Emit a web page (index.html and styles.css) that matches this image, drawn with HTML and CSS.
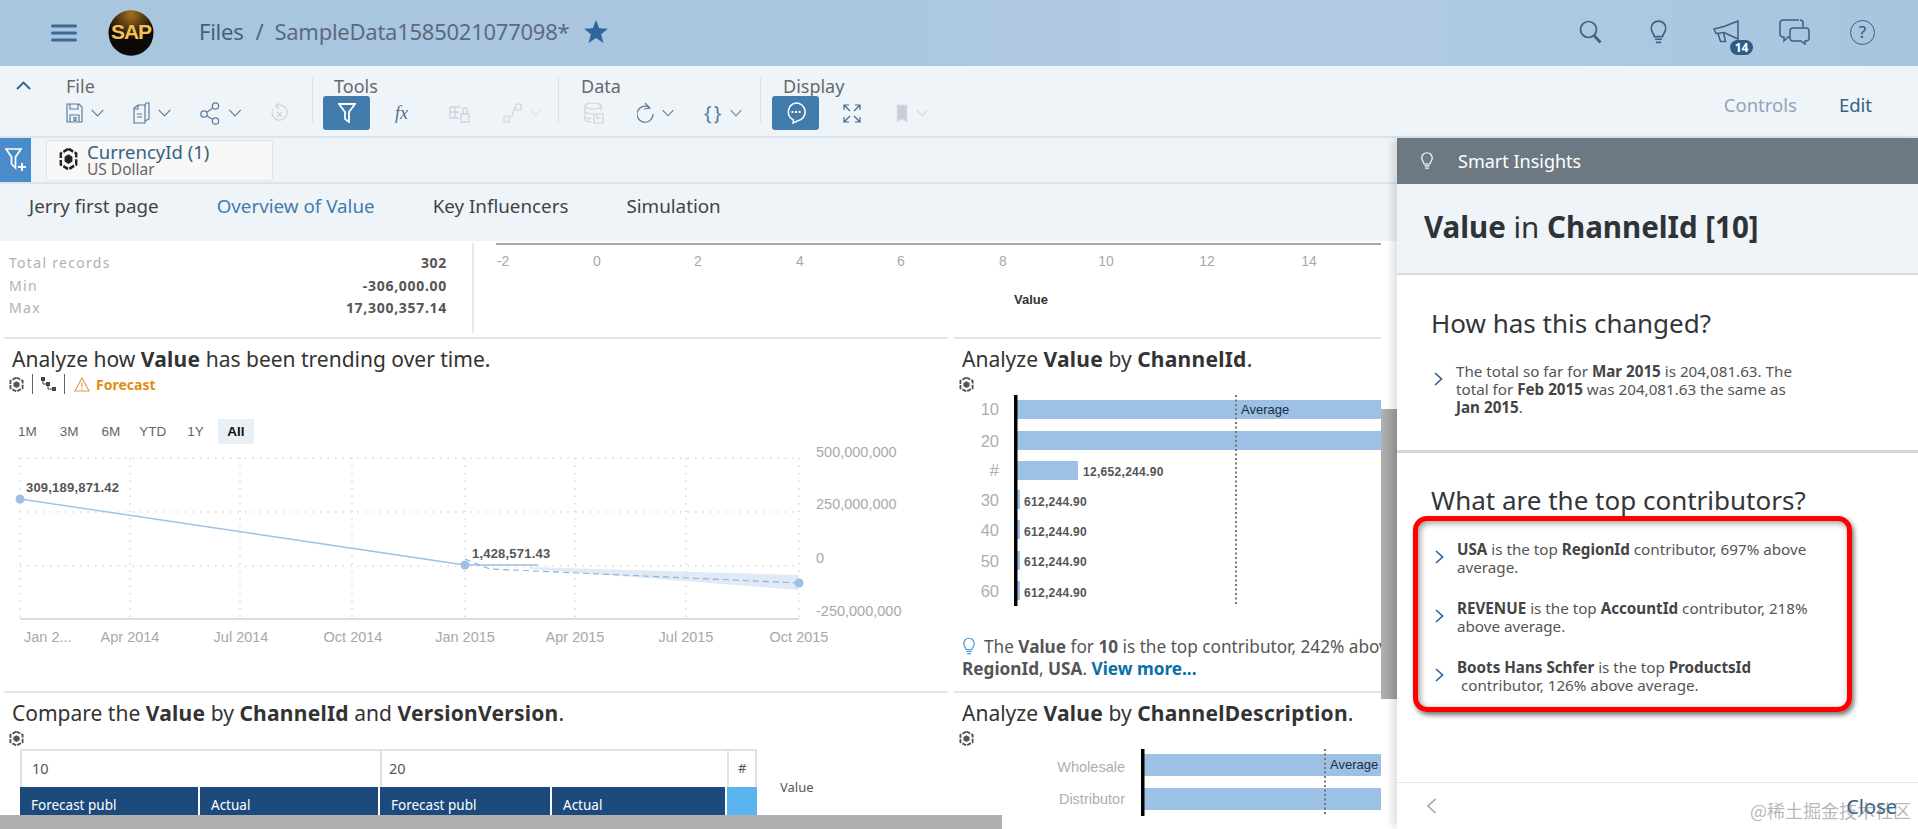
FILE: index.html
```html
<!DOCTYPE html>
<html lang="en">
<head>
<meta charset="utf-8">
<title>Smart Insights</title>
<link rel="stylesheet" href="styles.css">
</head>
<body>
<svg class="defs" width="0" height="0" aria-hidden="true">
  <symbol id="cube" viewBox="0 0 16 16">
    <path d="M8 .5 14.5 4v8L8 15.500 1.500 12V4z" fill="none" stroke="currentColor" stroke-width="2" stroke-dasharray="4.500 1.300"/>
    <path d="M8 4.500 11.300 6.300v3.600L8 11.700 4.700 9.900V6.300z" fill="currentColor"/>
  </symbol>
  <symbol id="chev" viewBox="0 0 13 8">
    <path d="M.7 .8 6.500 7 12.300 .8" fill="none" stroke="currentColor" stroke-width="1.100"/>
  </symbol>
  <symbol id="bulb" viewBox="0 0 16 24">
    <path d="M8 1a7 7 0 0 0-7 7c0 3.200 2.300 4.800 3.200 8h7.600c.9-3.200 3.200-4.800 3.200-8a7 7 0 0 0-7-7zM4.700 18.500h6.600M5.500 21.500h5" fill="none" stroke="currentColor" stroke-width="1.600"/>
  </symbol>
  <symbol id="right" viewBox="0 0 9 14">
    <path d="M1 1 7.500 7 1 13" fill="none" stroke="currentColor" stroke-width="1.700"/>
  </symbol>
</svg>

<header class="shell">
  <svg class="burger" width="26" height="18" viewBox="0 0 26 18"><path d="M1.500 2h23M1.500 9h23M1.500 16h23" stroke="#3a6a94" stroke-width="3" stroke-linecap="round"/></svg>
  <svg class="logo" width="46" height="46" viewBox="0 0 46 46">
    <defs><radialGradient id="lg" cx=".5" cy=".1" r=".55"><stop offset="0" stop-color="#a8701c"/><stop offset="1" stop-color="#0c0a08"/></radialGradient></defs>
    <ellipse cx="23" cy="23" rx="22.500" ry="22.800" fill="url(#lg)"/>
    <text x="23" y="29" text-anchor="middle" class="logo-text">SAP</text>
  </svg>
  <div class="crumbs"><span class="crumb-files">Files</span><span class="crumb-sep">/</span><span class="crumb-doc">SampleData1585021077098*</span></div>
  <svg class="star" width="24" height="23" viewBox="0 0 24 23"><path d="M12 0l3.200 8.300 8.800.5-6.900 5.500 2.300 8.700L12 18l-7.400 4.900 2.300-8.700L0 8.800l8.800-.5z" fill="#2f659c"/></svg>
  <div class="shell-icons">
    <svg width="23" height="24" viewBox="0 0 23 24"><circle cx="9.500" cy="9.500" r="8" fill="none" stroke="#3b6083" stroke-width="1.700"/><path d="M15 15.500l6.500 7" stroke="#3b6083" stroke-width="2.600"/></svg>
    <svg class="shell-bulb" width="17" height="25" viewBox="0 0 16 24"><use href="#bulb"/></svg>
    <div class="mega">
      <svg width="26" height="24" viewBox="0 0 26 24"><path d="M25 1v18L11 12.500 3 13.500 1 9l10-2.500zM5 13.500l2.500 8h5l-2-9" fill="none" stroke="#3b6083" stroke-width="1.500"/></svg>
      <span class="badge">14</span>
    </div>
    <svg class="shell-chat" width="31" height="26" viewBox="0 0 31 26"><path d="M20 1H4a3 3 0 0 0-3 3v11a3 3 0 0 0 3 3h1v4l4-4h2M14 9h13a3 3 0 0 1 3 3v7a3 3 0 0 1-3 3h-1v3l-4-3h-8a3 3 0 0 1-3-3v-7a3 3 0 0 1 3-3zM21 1a3 3 0 0 1 3 3v4" fill="none" stroke="#3b6083" stroke-width="1.500"/></svg>
    <div class="help">?</div>
  </div>
</header>

<section class="tbar">
  <svg class="collapse" width="15" height="9" viewBox="0 0 15 9"><path d="M1 8l6.500-6.500L14 8" fill="none" stroke="#346187" stroke-width="1.800"/></svg>
  <div class="tgroup tg-file">
    <div class="tlabel">File</div>
    <div class="trow">
      <div class="tool"><svg width="17" height="20" viewBox="0 0 17 20"><path d="M1 1h12l3 3v15H1zM4 1v5h8V1M4 19v-7h9v7M8 14.500h2v3H8z" fill="none" stroke="#5a7c9c" stroke-width="1.200"/></svg><svg class="cv" width="13" height="8"><use href="#chev"/></svg></div>
      <div class="tool"><svg width="17" height="22" viewBox="0 0 17 22"><path d="M1 6l4-3h7v18H1zM5 3v4H1M12 4l1-3h3v16l-4 2M4 12h5M4 15h5" fill="none" stroke="#5a7c9c" stroke-width="1.200"/></svg><svg class="cv" width="13" height="8"><use href="#chev"/></svg></div>
      <div class="tool"><svg width="20" height="23" viewBox="0 0 20 23"><circle cx="15.500" cy="4" r="3.200" fill="none" stroke="#5a7c9c" stroke-width="1.200"/><circle cx="4" cy="12" r="3.200" fill="none" stroke="#5a7c9c" stroke-width="1.200"/><circle cx="15.500" cy="19" r="3.200" fill="none" stroke="#5a7c9c" stroke-width="1.200"/><path d="M7 10l6-4M7 14l6 3.500" stroke="#5a7c9c" stroke-width="1.200"/></svg><svg class="cv" width="14" height="8"><use href="#chev"/></svg></div>
      <svg class="t-undo" width="17" height="22" viewBox="0 0 17 22"><path d="M5 4a7.500 7.500 0 1 1-3 3M8 1 4.500 4 8 7M6 10l5 5M11 10l-5 5" fill="none" stroke="#cdd5dc" stroke-width="1.200"/></svg>
    </div>
  </div>
  <div class="tsep"></div>
  <div class="tgroup tg-tools">
    <div class="tlabel">Tools</div>
    <div class="trow">
      <div class="tbtn"><svg width="18" height="20" viewBox="0 0 18 20"><path d="M1 1h16l-6 8v10l-4-3V9z" fill="none" stroke="#fff" stroke-width="1.800"/></svg></div>
      <span class="t-fx">fx</span>
      <svg class="t-lock" width="21" height="19" viewBox="0 0 21 19"><path d="M1 3h10M1 3v11h9M1 8h9M6 3v11M12 10h8v8h-8zM14 10V6a2 2 0 0 1 4 0v4" fill="none" stroke="#cbd4dc" stroke-width="1.300"/></svg>
      <div class="tool t-chart"><svg width="19" height="20" viewBox="0 0 19 20"><path d="M1 13h5v6H1zM13 1h5v6h-5zM6 15c5 0 3-10 7-11" fill="none" stroke="#cbd4dc" stroke-width="1.200"/></svg><svg class="cv off" width="11" height="8"><use href="#chev"/></svg></div>
    </div>
  </div>
  <div class="tsep"></div>
  <div class="tgroup tg-data">
    <div class="tlabel">Data</div>
    <div class="trow">
      <svg width="20" height="22" viewBox="0 0 20 22"><ellipse cx="9" cy="4" rx="8" ry="3" fill="none" stroke="#cbd4dc" stroke-width="1.200"/><path d="M1 4v13c0 1.500 3 3 7 3M17 4v5M1 9c0 2 4 3 8 3M1 14c0 1.500 3 2.500 6 2.800M10 12h9v9h-9zM13 12v4h4" fill="none" stroke="#cbd4dc" stroke-width="1.200"/></svg>
      <div class="tool t-refresh"><svg width="17" height="23" viewBox="0 0 17 23"><path d="M13 6a8 8 0 1 0 3 6M8 1l5 5-6 1" fill="none" stroke="#5a7c9c" stroke-width="1.200"/></svg><svg class="cv" width="12" height="8"><use href="#chev"/></svg></div>
      <div class="tool t-braces"><span class="braces">{ }</span><svg class="cv" width="12" height="8"><use href="#chev"/></svg></div>
    </div>
  </div>
  <div class="tsep"></div>
  <div class="tgroup tg-display">
    <div class="tlabel">Display</div>
    <div class="trow">
      <div class="tbtn"><svg width="20" height="22" viewBox="0 0 20 22"><path d="M10 1a9 9 0 0 1 2 17.800L7 21l.500-3A9 9 0 0 1 10 1z" fill="none" stroke="#fff" stroke-width="1.500"/><path d="M5.500 10h2M9 10h2M12.500 10h2" stroke="#fff" stroke-width="1.800"/></svg></div>
      <svg class="t-expand" width="18" height="19" viewBox="0 0 18 19"><path d="M7 7 1 1M1 6V1h5M11 7l6-6M12 1h5v5M7 12l-6 6M1 13v5h5M11 12l6 6M17 13v5h-5" fill="none" stroke="#45698a" stroke-width="1.200"/></svg>
      <div class="tool t-mark"><svg width="12" height="19" viewBox="0 0 12 19"><path d="M1 1h10v17l-5-3-5 3z" fill="#c6ced6" stroke="#dde3e8"/></svg><svg class="cv off" width="12" height="8"><use href="#chev"/></svg></div>
    </div>
  </div>
  <div class="tright"><span class="t-controls">Controls</span><span class="t-edit">Edit</span></div>
</section>

<div class="body-row">
  <main class="main">
    <div class="fbar">
      <div class="fbtn"><svg width="22" height="24" viewBox="0 0 22 24"><path d="M1 1h15l-5.500 8v11L6.500 16V9z" fill="none" stroke="#fff" stroke-width="1.700"/><path d="M17 15v8M13 19h8" stroke="#fff" stroke-width="1.800"/></svg></div>
      <div class="chip">
        <svg class="chip-ico" width="19" height="22" viewBox="0 0 16 16" preserveAspectRatio="none"><use href="#cube"/></svg>
        <div class="chip-text"><div class="chip-name">CurrencyId (1)</div><div class="chip-val">US Dollar</div></div>
      </div>
    </div>
    <nav class="tabs">
      <span class="tab">Jerry first page</span>
      <span class="tab tab-on">Overview of Value</span>
      <span class="tab">Key Influencers</span>
      <span class="tab">Simulation</span>
    </nav>
    <div class="content">
      <div class="grid">
        <div class="top-row">
          <div class="stats">
            <div class="stat"><span>Total records</span><b>302</b></div>
            <div class="stat"><span>Min</span><b>-306,000.00</b></div>
            <div class="stat"><span>Max</span><b>17,300,357.14</b></div>
          </div>
          <svg class="chart" width="907" height="96" viewBox="474 240 907 96">
            <path d="M496 243H1381" stroke="#8a8a8a" stroke-width="1.500"/>
            <g class="tick top-tick">
              <text x="503" y="265">-2</text><text x="597" y="265">0</text><text x="698" y="265">2</text><text x="800" y="265">4</text><text x="901" y="265">6</text><text x="1003" y="265">8</text><text x="1106" y="265">10</text><text x="1207" y="265">12</text><text x="1309" y="265">14</text>
            </g>
            <text x="1031" y="303" class="top-value">Value</text>
          </svg>
        </div>

        <div class="card card-l">
          <h2 class="ctitle">Analyze how <b>Value</b> has been trending over time.</h2>
          <div class="meta">
            <svg class="mi" width="15" height="15"><use href="#cube"/></svg>
            <i class="msep"></i>
            <svg width="15" height="15" viewBox="0 0 15 15"><path d="M0 0h4v4H0zM5 5h4v4H5zM11 10h4v4h-4z" fill="#444"/><path d="M2 3v4h3M7 8v4h4" fill="none" stroke="#444"/></svg>
            <i class="msep"></i>
            <svg class="warn" width="16" height="15" viewBox="0 0 16 15"><path d="M8 1l7 13H1zM8 5.500v4.500M8 11v1.500" fill="none" stroke="#e8973a" stroke-width="1.100"/></svg>
            <span class="forecast">Forecast</span>
          </div>
          <div class="ranges"><span class="r-1m">1M</span><span class="r-3m">3M</span><span class="r-6m">6M</span><span class="r-ytd">YTD</span><span class="r-1y">1Y</span><span class="r-all">All</span></div>
          <svg class="chart line-chart" width="940" height="212" viewBox="12 445 940 212">
            <g class="grid-d">
              <path d="M20 459H799M20 513H799M20 567H799"/>
              <path d="M20 459V620M130 459V620M240 459V620M352 459V620M465 459V620M575 459V620M686 459V620M799 459V620"/>
            </g>
            <path d="M20 620H799" class="axis-l"/>
            <path d="M530 568 799 576V591L530 570z" fill="#dfeaf6"/>
            <path d="M20 500 465 566 538 566" class="sl"/>
            <path d="M465 560 490 570 799 584" class="sd"/>
            <circle cx="20" cy="500" r="4.500" fill="#9cc1e5"/><circle cx="465" cy="566" r="4.500" fill="#9cc1e5"/><circle cx="799" cy="584" r="4.500" fill="#9cc1e5"/>
            <text x="26" y="493" class="dl">309,189,871.42</text>
            <text x="472" y="559" class="dl">1,428,571.43</text>
            <g class="tick">
              <text x="816" y="458">500,000,000</text><text x="816" y="510">250,000,000</text><text x="816" y="564">0</text><text x="816" y="617">-250,000,000</text>
              <text x="24" y="643">Jan 2...</text>
              <text x="130" y="643" class="mid">Apr 2014</text><text x="241" y="643" class="mid">Jul 2014</text><text x="353" y="643" class="mid">Oct 2014</text><text x="465" y="643" class="mid">Jan 2015</text><text x="575" y="643" class="mid">Apr 2015</text><text x="686" y="643" class="mid">Jul 2015</text><text x="799" y="643" class="mid">Oct 2015</text>
            </g>
          </svg>
        </div>

        <div class="card card-r">
          <h2 class="ctitle">Analyze <b>Value</b> by <b>ChannelId</b>.</h2>
          <div class="meta"><svg class="mi" width="15" height="15"><use href="#cube"/></svg></div>
          <svg class="chart bar-chart" width="427" height="212" viewBox="954 394 427 212">
            <g fill="#9cc1e5">
              <rect x="1017" y="399" width="364" height="19"/><rect x="1017" y="430" width="364" height="19"/><rect x="1017" y="460" width="61" height="19"/>
              <rect x="1017" y="489" width="3" height="19"/><rect x="1017" y="519" width="3" height="19"/><rect x="1017" y="550" width="3" height="19"/><rect x="1017" y="580" width="3" height="19"/>
            </g>
            <rect x="1014" y="394" width="3.500" height="211"/>
            <path d="M1236 394V604" class="avg"/>
            <text x="1241" y="413" class="avgt">Average</text>
            <g class="cat">
              <text x="999" y="414">10</text><text x="999" y="446">20</text><text x="999" y="475">#</text><text x="999" y="505">30</text><text x="999" y="535">40</text><text x="999" y="566">50</text><text x="999" y="596">60</text>
            </g>
            <g class="bl">
              <text x="1083" y="475">12,652,244.90</text><text x="1024" y="505">612,244.90</text><text x="1024" y="535">612,244.90</text><text x="1024" y="565">612,244.90</text><text x="1024" y="596">612,244.90</text>
            </g>
          </svg>
          <p class="insight"><svg class="in-bulb" width="12" height="19" viewBox="0 0 16 24"><use href="#bulb"/></svg><span class="in-text">The <b>Value</b> for <b>10</b> is the top contributor, 242% above average. The top contributor is <br><b>RegionId</b>, <b>USA</b>. <a class="more">View more...</a></span></p>
        </div>

        <div class="card card-l card-b">
          <h2 class="ctitle">Compare the <b>Value</b> by <b>ChannelId</b> and <b>VersionVersion</b>.</h2>
          <div class="meta"><svg class="mi" width="15" height="15"><use href="#cube"/></svg></div>
          <div class="pivot-wrap">
            <div class="pivot">
              <div class="ph ph-a">10</div><div class="ph ph-b">20</div><div class="ph ph-c">#</div>
              <div class="pc pc-1">Forecast publ</div><div class="pc pc-2">Actual</div><div class="pc pc-3">Forecast publ</div><div class="pc pc-4">Actual</div><div class="pc pc-5"></div>
            </div>
            <span class="pv">Value</span>
          </div>
        </div>

        <div class="card card-r card-b">
          <h2 class="ctitle">Analyze <b>Value</b> by <b>ChannelDescription</b>.</h2>
          <div class="meta"><svg class="mi" width="15" height="15"><use href="#cube"/></svg></div>
          <svg class="chart bar-chart" width="427" height="70" viewBox="954 748 427 70">
            <g fill="#9cc1e5"><rect x="1144" y="753" width="237" height="22"/><rect x="1144" y="787" width="237" height="22"/></g>
            <rect x="1141" y="748" width="3.500" height="67"/>
            <path d="M1325 748V814" class="avg"/>
            <text x="1330" y="768" class="avgt">Average</text>
            <g class="cat cat-s"><text x="1125" y="771">Wholesale</text><text x="1125" y="803">Distributor</text></g>
          </svg>
        </div>
      </div>
      <div class="vscroll"></div>
      <div class="hscroll"></div>
    </div>
  </main>

  <aside class="panel">
    <div class="p-head"><svg class="p-bulb" width="12" height="18" viewBox="0 0 16 24"><use href="#bulb"/></svg><span>Smart Insights</span></div>
    <div class="p-title"><b>Value</b> in <b>ChannelId [10]</b></div>
    <section class="p-sec p-sec1">
      <h3 class="p-h">How has this changed?</h3>
      <div class="item">
        <svg class="arrow" width="9" height="14"><use href="#right"/></svg>
        <p>The total so far for <b>Mar 2015</b> is 204,081.63. The total for <b>Feb 2015</b> was 204,081.63 the same as <b>Jan 2015</b>.</p>
      </div>
    </section>
    <section class="p-sec2">
      <h3 class="p-h">What are the top contributors?</h3>
      <div class="redbox">
        <div class="item"><svg class="arrow" width="9" height="14"><use href="#right"/></svg><p><b>USA</b> is the top <b>RegionId</b> contributor, 697% above average.</p></div>
        <div class="item"><svg class="arrow" width="9" height="14"><use href="#right"/></svg><p><b>REVENUE</b> is the top <b>AccountId</b> contributor, 218% above average.</p></div>
        <div class="item"><svg class="arrow" width="9" height="14"><use href="#right"/></svg><p><b>Boots Hans Schfer</b> is the top <b>ProductsId</b><br>&nbsp;contributor, 126% above average.</p></div>
      </div>
    </section>
    <footer class="p-foot">
      <svg width="11" height="16" viewBox="0 0 11 16"><path d="M9.500 1 2 8l7.500 7" fill="none" stroke="#9aa9b6" stroke-width="1.700"/></svg>
      <span class="p-close">Close</span>
    </footer>
    <div class="wm">@稀土掘金技术社区</div>
  </aside>
</div>
</body>
</html>
```

FILE: styles.css
```css
* { box-sizing: border-box; }
html, body { margin: 0; height: 829px; overflow: hidden; }
body { font-family: "Noto Sans", "Open Sans", sans-serif; color: #32363a; background: #fff; width: 1918px; display: flex; flex-direction: column; }
.defs { position: absolute; }
svg { display: block; flex: none; }
h2, h3, p { margin: 0; font-weight: 400; }

/* shell */
.shell { height: 66px; flex: none; display: flex; align-items: center; padding-left: 51px; background: linear-gradient(90deg, #a9c6df 0%, #aac7df 40%, #b0cae2 62%, #aecae1 80%, #a9c5de 100%); }
.logo { margin-left: 31px; }
.logo-text { font: 700 21px "Liberation Sans", sans-serif; fill: #f3c154; letter-spacing: -1px; }
.crumbs { margin: 0 0 5px 45px; display: flex; font-size: 22px; width: 373px; color: #4a6078; letter-spacing: -.25px; white-space: nowrap; }
.crumb-sep { margin: 0 11px 0 12px; color: #4f657b; }
.crumb-doc { color: #5b6b7c; }
.star { margin: 0 0 3px 12px; }
.shell-icons { margin: 0 0 2px auto; display: flex; align-items: center; padding-right: 43px; color: #3b6083; }
.shell-bulb { margin-left: 48px; }
.mega { position: relative; margin-left: 46px; }
.badge { position: absolute; left: 17px; top: 20px; width: 23px; height: 15px; border-radius: 8px; background: #2f5b87; color: #fff; font: 700 12px/15px "Noto Sans", sans-serif; text-align: center; }
.shell-chat { margin-left: 40px; }
.help { margin-left: 40px; width: 25px; height: 25px; border: 1.800px solid #3b6083; border-radius: 50%; font-size: 17px; line-height: 21px; text-align: center; color: #2f5678; }

/* toolbar */
.tbar { height: 72px; flex: none; display: flex; align-items: flex-start; padding: 10px 46px 0 16px; background: #eff4f9; border-bottom: 2px solid #dce3ea; position: relative; }
.collapse { margin-top: 5px; flex: none; }
.tgroup { flex: none; }
.tg-file { margin-left: 35px; width: 246px; }
.tg-tools { width: 245px; padding-left: 10px; }
.tg-tools .tlabel { padding-left: 11px; }
.tg-data { width: 201px; padding-left: 25px; }
.tg-data .tlabel { margin-left: -3px; }
.tg-display { padding-left: 11px; }
.tg-display .tlabel { padding-left: 11px; }
.tlabel { font-size: 18px; line-height: 20px; color: #646a70; }
.trow { display: flex; align-items: center; height: 34px; }
.tg-file .trow { gap: 29px; }
.tool { display: flex; align-items: center; gap: 8px; color: #5a7c9c; flex: none; }
.cv { color: #5a7c9c; }
.cv.off { color: #cbd4dc; }
.tsep { width: 1px; height: 44px; margin-top: 2px; background: #d8dfe6; flex: none; }
.tbtn { width: 47px; height: 34px; border-radius: 3px; background: #427cac; display: flex; align-items: center; justify-content: center; flex: none; }
.t-fx { margin-left: 25px; width: 16px; font: italic 18px "Liberation Serif", serif; color: #4b6c8b; }
.t-lock { margin-left: 38px; }
.t-chart { margin-left: 33px; }
.t-refresh { margin-left: 33px; }
.t-braces { margin-left: 30px; }
.braces { font-size: 20px; line-height: 24px; width: 18px; color: #5a7c9c; white-space: nowrap; letter-spacing: -1.500px; }
.t-expand { margin-left: 24px; }
.t-mark { margin-left: 35px; }
.tright { margin-left: auto; align-self: center; margin-top: -3px; display: flex; gap: 42px; font-size: 18.500px; }
.t-controls { color: #90a4b8; }
.t-edit { color: #346187; }

/* body */
.body-row { flex: 1; display: flex; min-height: 0; }
.main { width: 1397px; flex: none; display: flex; flex-direction: column; background: #eff4f9; min-height: 0; }
.fbar { height: 46px; flex: none; display: flex; align-items: center; border-bottom: 2px solid #dce3ea; }
.fbtn { width: 31px; height: 44px; margin-left: 0; background: #4a8cc9; display: flex; align-items: center; justify-content: center; }
.chip { margin-left: 15px; width: 227px; height: 41px; background: #f8f8f6; border: 1px solid #e0e4e8; border-radius: 3px; display: flex; align-items: center; padding: 0 0 2px 12px; }
.chip-ico { color: #222; }
.chip-text { margin-left: 9px; }
.chip-name { font-size: 18.500px; line-height: 20px; color: #346187; }
.chip-val { font-size: 15.500px; line-height: 15px; color: #666; }
.tabs { height: 57px; flex: none; display: flex; align-items: center; padding: 0 0 14px 29px; gap: 58px; font-size: 18.800px; color: #3f4347; }
.tab-on { color: #427cac; }

.content { flex: 1; min-height: 0; position: relative; background: #fff; overflow: hidden; }
.grid { display: grid; grid-template-columns: 954px 427px; grid-template-rows: 96px 354px 1fr; height: 100%; }
.top-row { grid-column: 1 / -1; display: flex; align-items: flex-start; }
.stats { width: 474px; height: 90px; margin-top: 2px; padding: 9px 25px 0 9px; border-right: 2px solid #e8e8e8; font-size: 14px; flex: none; }
.stat { display: flex; justify-content: space-between; line-height: 22.500px; letter-spacing: 1.300px; color: #b0b0b0; }
.stat b { color: #555; font-weight: 700; letter-spacing: .7px; }
.top-tick text { text-anchor: middle; font-size: 14px; }
.top-value { font-size: 13px; font-weight: 700; fill: #333; text-anchor: middle; }
.card { border-top: 2px solid #e6e6e6; padding-left: 8px; min-width: 0; overflow: hidden; }
.card-l { margin: 0 6px 0 4px; }
.ctitle { font-size: 21px; line-height: 28px; padding-top: 6px; height: 34px; color: #333; white-space: nowrap; }
.ctitle b { font-weight: 700; letter-spacing: .25px; }
.meta { height: 22px; display: flex; align-items: center; margin-left: -3px; color: #555; }
.mi { color: #555; }
.msep { width: 1px; height: 20px; background: #666; margin: 0 8px; }
.warn { margin-left: 1px; }
.forecast { margin-left: 6px; font-weight: 700; font-size: 14px; color: #e08c12; }
.ranges { margin-top: 24px; height: 25px; display: flex; align-items: center; font: 13.500px "Liberation Sans", sans-serif; color: #666; }
.ranges span { flex: none; }
.r-1m { margin-left: 6px; }
.r-3m { margin-left: 23px; }
.r-6m { margin-left: 23px; }
.r-ytd { margin-left: 19px; }
.r-1y { margin-left: 21px; }
.r-all { margin-left: 14px; width: 36px; height: 25px; line-height: 25px; text-align: center; background: #e8eff6; color: #111; font-weight: 700; }

/* svg charts */
.chart text { font-family: "Liberation Sans", sans-serif; }
.grid-d path { fill: none; stroke: #d8d8d8; stroke-width: 1.500; stroke-dasharray: 1.500 6; }
.axis-l { stroke: #dcdcdc; stroke-width: 2; }
.sl { fill: none; stroke: #9cc1e5; stroke-width: 1.400; }
.sd { fill: none; stroke: #8fb0d0; stroke-width: 1.100; stroke-dasharray: 6 4; }
.dl { font-size: 13px; font-weight: 700; fill: #555; letter-spacing: .2px; }
.tick { font-size: 14.500px; fill: #a8a8a8; }
.tick .mid { text-anchor: middle; }
.bar-chart { margin-left: -8px; }
.avg { stroke: #777; stroke-width: 2; stroke-dasharray: 2 2.500; }
.avgt { font-size: 13px; fill: #1f2d3d; }
.cat text { font-size: 16.500px; fill: #aeaeae; text-anchor: end; }
.cat-s text { font-size: 14.500px; }
.bl text { font-size: 12px; font-weight: 700; fill: #555; letter-spacing: .3px; }
.insight { position: relative; height: 46px; margin-top: 29px; font-size: 17.200px; line-height: 22px; color: #555; white-space: nowrap; overflow: hidden; }
.in-bulb { position: absolute; left: 1px; top: 1px; color: #3f9bd0; }
.in-text { display: block; text-indent: 22px; }
.in-text b { color: #555; }
.more { color: #0a6ea8; font-weight: 700; }
.pivot-wrap { display: flex; margin-left: 8px; }
.pivot { display: grid; grid-template-columns: 180px 180px 172px 175px 30px; grid-template-rows: 36px 1fr; width: 737px; height: 70px; border-top: 2px solid #e2e2e2; }
.ph { font-size: 14.500px; line-height: 34px; color: #555; padding-left: 10px; border-left: 2px solid #e2e2e2; }
.ph-a { grid-column: 1 / 3; }
.ph-b { grid-column: 3 / 5; padding-left: 7px; }
.ph-c { border-right: 2px solid #e2e2e2; padding-left: 9px; font-size: 13px; }
.pc { background: #1c4a7c; color: #fff; font-size: 13.500px; line-height: 36px; padding-left: 11px; border-right: 2px solid #fff; }
.pc-5 { background: #5ab4f0; border-right: 0; }
.pv { margin: 29px 0 0 23px; font-size: 13px; color: #555; }
.vscroll { position: absolute; left: 1381px; top: 168px; width: 16px; height: 290px; background: linear-gradient(90deg, #b0b0b0, #9f9f9f); }
.hscroll { position: absolute; left: 0; bottom: 0; width: 1002px; height: 14px; background: #b0b0b0; }

/* panel */
.panel { flex: 1; display: flex; flex-direction: column; position: relative; background: #fff; box-shadow: -7px 0 7px -2px rgba(0,0,0,.12); min-width: 0; }
.p-head { height: 46px; flex: none; display: flex; align-items: center; padding-left: 24px; background: #6d7982; color: #fff; font-size: 18px; gap: 25px; }
.p-title { height: 91px; flex: none; padding: 23px 0 0 27px; background: #eff4f9; border-bottom: 2px solid #d6dce3; font-size: 29.500px; line-height: 40px; color: #2e3338; }
.p-sec1 { height: 178px; flex: none; border-bottom: 3px solid #d5d5d5; padding: 31px 0 0 34px; }
.p-h { font-size: 26px; line-height: 34px; color: #32363a; }
.item { display: flex; position: relative; font-size: 15.200px; line-height: 18px; color: #555; }
.item p { flex: 1; }
.item b { color: #444; }
.arrow { color: #2f6497; flex: none; margin: 10px 13px 0 3px; }
.p-sec1 .item { margin-top: 22px; width: 372px; }
.p-sec2 { flex: 1; padding: 30px 0 0 34px; }
.redbox { margin: -1px 0 0 -18px; width: 439px; height: 196px; border: 5px solid #f00; border-radius: 14px; box-shadow: 2px 3px 5px rgba(0,0,0,.55), inset 2px 2px 6px rgba(0,0,0,.4); padding: 19px 16px 0 14px; display: flex; flex-direction: column; gap: 23px; }
.p-foot { height: 47px; flex: none; border-top: 1px solid #e5e5e5; display: flex; align-items: center; justify-content: space-between; padding: 0 21px 0 29px; }
.p-close { font-size: 20px; color: #346187; }
.wm { position: absolute; right: 7px; bottom: 6px; font-family: "Noto Sans CJK SC", sans-serif; font-size: 18px; color: rgba(120,120,120,.55); white-space: nowrap; }
```
